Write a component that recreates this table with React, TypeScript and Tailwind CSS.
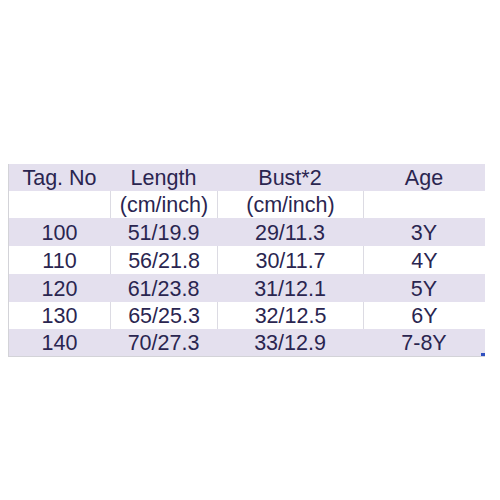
const rows = [
  { h: "h-[28px]", tag: "100", len: "51/19.9", bust: "29/11.3", age: "3Y", shade: true },
  { h: "h-[28px]", tag: "110", len: "56/21.8", bust: "30/11.7", age: "4Y", shade: false },
  { h: "h-[28px]", tag: "120", len: "61/23.8", bust: "31/12.1", age: "5Y", shade: true },
  { h: "h-[27px]", tag: "130", len: "65/25.3", bust: "32/12.5", age: "6Y", shade: false },
  { h: "h-[27px]", tag: "140", len: "70/27.3", bust: "33/12.9", age: "7-8Y", shade: true },
];

const cols = ["w-[101px]", "w-[107px]", "w-[146px]", "w-[122px]"];

function Row({ cells, h, shade }: { cells: string[]; h: string; shade: boolean }) {
  return (
    <div className={`flex ${h} ${shade ? "bg-[#e4e0ee]" : "bg-white"}`}>
      {cells.map((c, i) => (
        <div
          key={i}
          className={`${cols[i]} flex items-center justify-center pt-[3px] ${
            !shade && i > 0 ? "border-l border-[#dcdbe3]" : ""
          }`}
        >
          {c}
        </div>
      ))}
    </div>
  );
}

export default function App() {
  return (
    <div className="w-[500px] h-[500px] bg-white pt-[164px] pl-[8px]">
      <div
        className="relative w-[477px] border-l border-b border-[#d3d3d8] text-[21.5px] leading-none text-[#2a2550]"
        style={{ fontFamily: '"Liberation Sans", Arial, sans-serif' }}
      >
        <Row cells={["Tag. No", "Length", "Bust*2", "Age"]} h="h-[27px]" shade={true} />
        <Row cells={["", "(cm/inch)", "(cm/inch)", ""]} h="h-[27px]" shade={false} />
        {rows.map((r) => (
          <Row key={r.tag} cells={[r.tag, r.len, r.bust, r.age]} h={r.h} shade={r.shade} />
        ))}
        <div className="absolute right-0 bottom-0 w-[4px] h-[3px] bg-[#3050c0]" />
      </div>
    </div>
  );
}
